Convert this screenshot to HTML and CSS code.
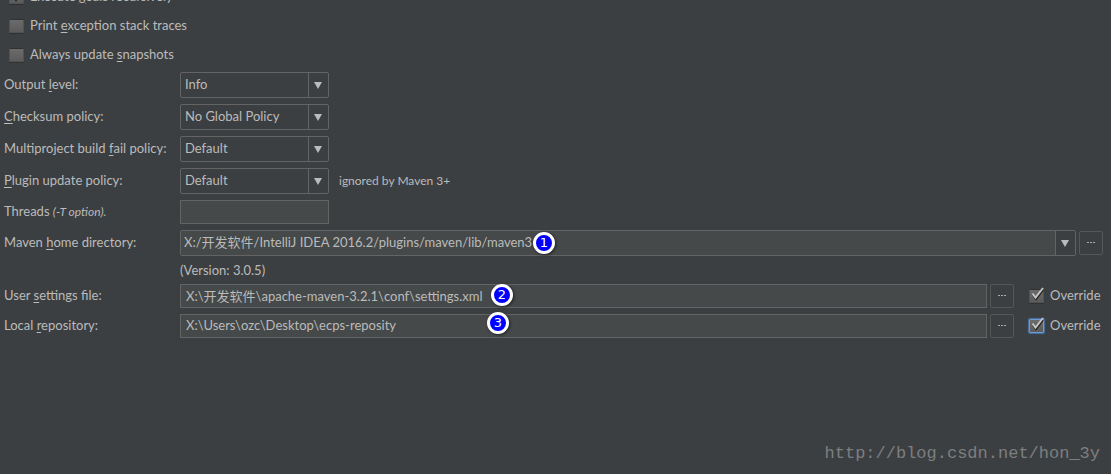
FILE: index.html
```html
<!DOCTYPE html>
<html lang="en">
<head>
<meta charset="utf-8">
<title>Maven settings</title>
<link rel="stylesheet" href="styles.css">
</head>
<body>
<form class="settings">
  <div class="row check-row">
    <label class="check"><span class="box"><input type="checkbox" checked><svg class="tick" viewBox="0 0 16 16"><path class="tick-shade" d="M4 8L7 12L14 3"/><path d="M3.500 6.500L6.500 10.500L14 1"/></svg></span><span class="caption">Execute <u>g</u>oals recursively</span></label>
  </div>
  <div class="row check-row">
    <label class="check"><span class="box"><input type="checkbox"></span><span class="caption">Print <u>e</u>xception stack traces</span></label>
  </div>
  <div class="row check-row">
    <label class="check"><span class="box"><input type="checkbox"></span><span class="caption">Always update <u>s</u>napshots</span></label>
  </div>

  <div class="row">
    <label class="name" for="output">Output <u>l</u>evel:</label>
    <div class="select"><select id="output"><option>Info</option></select><span class="arrow"><svg viewBox="0 0 8 7"><path d="M0 0H8L4 7Z"/></svg></span></div>
  </div>
  <div class="row">
    <label class="name" for="checksum"><u>C</u>hecksum policy:</label>
    <div class="select"><select id="checksum"><option>No Global Policy</option></select><span class="arrow"><svg viewBox="0 0 8 7"><path d="M0 0H8L4 7Z"/></svg></span></div>
  </div>
  <div class="row">
    <label class="name" for="fail">Multiproject build <u>f</u>ail policy:</label>
    <div class="select"><select id="fail"><option>Default</option></select><span class="arrow"><svg viewBox="0 0 8 7"><path d="M0 0H8L4 7Z"/></svg></span></div>
  </div>
  <div class="row">
    <label class="name" for="plugin"><u>P</u>lugin update policy:</label>
    <div class="select"><select id="plugin"><option>Default</option></select><span class="arrow"><svg viewBox="0 0 8 7"><path d="M0 0H8L4 7Z"/></svg></span></div>
    <span class="hint">ignored by Maven 3+</span>
  </div>
  <div class="row">
    <label class="name" for="threads">Threads <i>(-T option).</i></label>
    <input class="text short" id="threads" type="text">
  </div>
  <div class="row">
    <label class="name" for="home">Maven <u>h</u>ome directory:</label>
    <div class="field combo">
      <input class="combo-text" id="home" type="text" value="X:/开发软件/IntelliJ IDEA 2016.2/plugins/maven/lib/maven3">
      <button class="combo-open" type="button" aria-label="Show list"><svg viewBox="0 0 8 7"><path d="M0 0H8L4 7Z"/></svg></button>
      <span class="badge badge-one">1</span>
    </div>
    <button class="browse" type="button" aria-label="Browse"><svg viewBox="0 0 8 2"><path d="M0 0h2v1H0zM3 0h2v1H3zM6 0h2v1H6z"/></svg></button>
  </div>
  <div class="row version">(Version: 3.0.5)</div>
  <div class="row">
    <label class="name" for="user">User <u>s</u>ettings file:</label>
    <div class="field">
      <input class="text" id="user" type="text" value="X:\开发软件\apache-maven-3.2.1\conf\settings.xml">
      <span class="badge badge-two">2</span>
    </div>
    <button class="browse" type="button" aria-label="Browse"><svg viewBox="0 0 8 2"><path d="M0 0h2v1H0zM3 0h2v1H3zM6 0h2v1H6z"/></svg></button>
    <label class="check override"><span class="box"><input type="checkbox" checked><svg class="tick" viewBox="0 0 16 16"><path class="tick-shade" d="M4 8L7 12L14 3"/><path d="M3.500 6.500L6.500 10.500L14 1"/></svg></span><span class="caption">Override</span></label>
  </div>
  <div class="row">
    <label class="name" for="local">Local <u>r</u>epository:</label>
    <div class="field">
      <input class="text" id="local" type="text" value="X:\Users\ozc\Desktop\ecps-reposity">
      <span class="badge badge-three">3</span>
    </div>
    <button class="browse" type="button" aria-label="Browse"><svg viewBox="0 0 8 2"><path d="M0 0h2v1H0zM3 0h2v1H3zM6 0h2v1H6z"/></svg></button>
    <label class="check override"><span class="box focused"><input type="checkbox" checked><svg class="tick" viewBox="0 0 16 16"><path class="tick-shade" d="M4 8L7 12L14 3"/><path d="M3.500 6.500L6.500 10.500L14 1"/></svg></span><span class="caption">Override</span></label>
  </div>
</form>
<footer class="source">http://blog.csdn.net/hon_3y</footer>
</body>
</html>
```
FILE: styles.css
```css
* {
  box-sizing: border-box;
}

body {
  margin: 0;
  min-height: 100vh;
  display: flex;
  flex-direction: column;
  justify-content: space-between;
  overflow: hidden;
  background: #3c3f41;
  color: #bbbbbb;
  font: 13px/16px Lato, "Noto Sans CJK SC", sans-serif;
}

input,
select,
button {
  margin: 0;
  color: inherit;
  font: inherit;
  outline: none;
}

u {
  text-decoration-thickness: 1px;
  text-underline-offset: 2px;
}

.settings {
  display: flex;
  flex-direction: column;
  gap: 6px;
  margin-top: -15px;
  padding: 0 8px 0 4px;
}

.row {
  display: flex;
  align-items: center;
}

.check-row {
  height: 23px;
  padding-left: 5px;
}

.name {
  flex: none;
  width: 176px;
  padding-bottom: 2px;
  white-space: nowrap;
}

.name i {
  font-size: 12px;
}

.check {
  display: flex;
  align-items: center;
  gap: 6px;
}

.caption {
  padding-bottom: 2px;
}

.box {
  position: relative;
  display: flex;
}

.box input {
  appearance: none;
  width: 15px;
  height: 14px;
  border: 1px solid #505355;
  border-top-color: #2f3133;
  border-radius: 1px;
  background: linear-gradient(#6b6b6b, #5b5b5b);
  box-shadow: 0 1px 0 #2f3133;
}

.focused input {
  border-color: #6c9bcf;
  box-shadow: 0 0 1px 1px #4a73a5;
}

.tick {
  position: absolute;
  left: 0;
  top: -2px;
  width: 16px;
  height: 16px;
  fill: none;
  stroke: #c4c4c4;
  stroke-width: 2;
  pointer-events: none;
}

.tick-shade {
  stroke: #222222;
}

.select {
  position: relative;
  width: 149px;
}

.select select {
  appearance: none;
  display: block;
  width: 100%;
  height: 26px;
  padding: 0 24px 2px 4px;
  border: 1px solid #646464;
  border-radius: 2px;
  background: #3c3f41;
}

.arrow {
  position: absolute;
  top: 1px;
  right: 1px;
  bottom: 1px;
  display: flex;
  align-items: center;
  justify-content: center;
  width: 20px;
  padding-right: 1px;
  border-left: 1px solid #646464;
  pointer-events: none;
}

.arrow svg,
.combo-open svg {
  width: 8px;
  height: 7px;
  fill: #bbbbbb;
}

.hint {
  margin-left: 10px;
  font-size: 12px;
}

.text {
  width: 100%;
  height: 24px;
  padding: 0 5px 2px;
  border: 1px solid #646464;
  background: #45494a;
}

.short {
  width: 149px;
}

.field {
  position: relative;
  display: flex;
  flex: 1;
}

.combo {
  height: 26px;
  border: 1px solid #646464;
  border-radius: 2px;
}

.combo-text {
  flex: 1;
  min-width: 0;
  padding: 0 3px 2px;
  border: 0;
  background: #45494a;
}

.combo-open {
  display: flex;
  align-items: center;
  justify-content: center;
  width: 20px;
  padding: 0 1px 0 0;
  border: 0;
  border-left: 1px solid #646464;
  background: #3c3f41;
}

.browse {
  display: flex;
  align-items: center;
  justify-content: center;
  width: 24px;
  height: 24px;
  margin-left: 3px;
  padding: 0;
  border: 1px solid #555759;
  border-radius: 2px;
  background: #3c3f41;
}

.browse svg {
  width: 8px;
  height: 2px;
  fill: #aaaaaa;
}

.version {
  padding-left: 176px;
}

.override {
  width: 89px;
  padding-left: 15px;
}

.badge {
  position: absolute;
  width: 22px;
  height: 22px;
  border: 3px solid #ffffff;
  border-radius: 50%;
  background: #0000ff;
  box-shadow: 1px 1px 3px #222222;
  color: #ffffff;
  font: 13px/16px "DejaVu Sans", sans-serif;
  text-align: center;
}

.badge-one {
  left: 352px;
  top: 1px;
}

.badge-two {
  left: 311px;
  top: 0;
}

.badge-three {
  left: 307px;
  top: -2px;
}

.source {
  padding: 0 11px 8px;
  color: #7c7e80;
  font: 17px/24px "Liberation Mono", monospace;
  text-align: right;
}
```
